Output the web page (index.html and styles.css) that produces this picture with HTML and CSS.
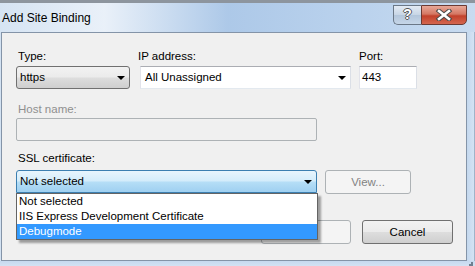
FILE: index.html
```html
<!DOCTYPE html>
<html lang="en">
<head>
    <meta charset="UTF-8">
    <meta name="viewport" content="width=device-width, initial-scale=1.0">
    <title>Add Site Binding</title>
    <link rel="stylesheet" href="styles.css">
</head>
<body>
<div class="window">
    <div class="titlebar">
        <span class="title">Add Site Binding</span>
        <div class="caption_btns">
            <div class="cap_help">?</div>
            <div class="cap_close">
                <svg width="18" height="12" viewBox="0 0 18 12">
                    <path d="M4 2 L14 10 M14 2 L4 10" stroke="#4a4a4a" stroke-width="4.6" stroke-linecap="square"/>
                    <path d="M4 2 L14 10 M14 2 L4 10" stroke="#ffffff" stroke-width="2.6" stroke-linecap="square"/>
                </svg>
            </div>
        </div>
    </div>
    <div class="frame_row">
        <div class="client">
            <div class="row_1">
                <div class="field f_type">
                    <label class="lbl">Type:</label>
                    <div class="combo combo_btn">https<span class="arrow"></span></div>
                </div>
                <div class="field f_ip">
                    <label class="lbl">IP address:</label>
                    <div class="combo combo_edit">All Unassigned<span class="arrow"></span></div>
                </div>
                <div class="field f_port">
                    <label class="lbl">Port:</label>
                    <div class="textbox">443</div>
                </div>
            </div>
            <div class="row_2">
                <label class="lbl lbl_dis">Host name:</label>
                <div class="textbox textbox_dis"></div>
            </div>
            <div class="row_3">
                <label class="lbl">SSL certificate:</label>
                <div class="ssl_line">
                    <div class="ssl_wrap">
                        <div class="combo combo_open">Not selected<span class="arrow"></span></div>
                        <ul class="droplist">
                            <li>Not selected</li>
                            <li>IIS Express Development Certificate</li>
                            <li class="sel">Debugmode</li>
                        </ul>
                    </div>
                    <button class="btn btn_dis" type="button">View...</button>
                </div>
            </div>
            <div class="row_btns">
                <button class="btn btn_ok" type="button">OK</button>
                <button class="btn" type="button">Cancel</button>
            </div>
        </div>
        <div class="right_edge"></div>
    </div>
    <div class="bottom_edge"><span class="grip"></span></div>
</div>
</body>
</html>
```

FILE: styles.css
```css
*{
    box-sizing: border-box;
    font-family: "Liberation Sans", Arial, sans-serif;
}
body{
    margin: 0;
    background: #3a4a5c;
}
.window{
    width: 475px;
    height: 266px;
    display: flex;
    flex-direction: column;
    background: linear-gradient(to right, #d3e2f2, #e2ecf7 22%, #b6cfea 48%, #bcd3ed 75%, #c8dbf0);
}
.titlebar{
    height: 32px;
    display: flex;
    justify-content: space-between;
    border-top: 3px solid #8d959e;
    background: linear-gradient(to right, rgba(214,228,243,.9), rgba(234,241,249,.9) 22%, rgba(172,200,232,.9) 48%, rgba(186,210,237,.9) 75%, rgba(200,219,240,.9));
}
.title{
    font-size: 12px;
    color: #000;
    padding: 8px 0 0 2px;
}
.caption_btns{
    display: flex;
    margin-right: 8px;
    height: 20px;
    margin-top: 2px;
}
.cap_help{
    width: 28px;
    height: 20px;
    border: 1px solid #6b7887;
    border-right: none;
    border-bottom-left-radius: 5px;
    background: linear-gradient(#e3ebf4, #c7d5e5 50%, #b3c6db 51%, #c6d6e8);
    color: #fff;
    font-weight: bold;
    font-size: 14px;
    text-align: center;
    line-height: 17px;
    text-shadow: 1px 0 0 #555, -1px 0 0 #555, 0 1px 0 #555, 0 -1px 0 #555;
}
.cap_close{
    width: 46px;
    height: 20px;
    border: 1px solid #6b3a33;
    border-bottom-right-radius: 5px;
    background: linear-gradient(#e8a898, #d47763 45%, #c2412b 55%, #d4664f);
    display: flex;
    justify-content: center;
    align-items: center;
}
.frame_row{
    display: flex;
    height: 229px;
}
.client{
    width: 466px;
    margin-left: 1px;
    height: 229px;
    border: 1px solid #8494a8;
    background: #f0f0f0;
    padding: 16px 13px 0 14px;
    display: flex;
    flex-direction: column;
    font-size: 11.5px;
}
.right_edge{
    width: 8px;
    background: linear-gradient(to right, #c4d8ee, #d4e3f4);
    border-right: 1px solid #9fb3c9;
}
.bottom_edge{
    height: 5px;
    position: relative;
    background: linear-gradient(#c6d9ef, #d3e2f3);
}
.grip{
    position: absolute;
    right: 2px;
    bottom: 0;
    width: 4px;
    height: 4px;
    border-right: 2px solid #6f7f90;
    border-bottom: 2px solid #6f7f90;
}
.lbl{
    display: block;
    height: 15px;
    line-height: 15px;
    color: #000;
    padding-left: 2px;
}
.lbl_dis{
    color: #8f8f8f;
}
.row_1{
    display: flex;
    gap: 10px;
}
.f_type{
    width: 114px;
}
.f_ip{
    width: 211px;
}
.f_ip .lbl{
    padding-left: 0;
    margin-left: -2px;
}
.f_port{
    width: 58px;
    margin-left: -2px;
}
.f_port .lbl{
    padding-left: 0;
}
.combo{
    position: relative;
    height: 23px;
    line-height: 21px;
    margin-top: 2px;
    padding-left: 3px;
    color: #000;
}
.arrow{
    position: absolute;
    right: 4px;
    top: 9px;
    width: 0;
    height: 0;
    border-left: 4px solid transparent;
    border-right: 4px solid transparent;
    border-top: 4px solid #000;
}
.combo_btn{
    border: 1px solid #707070;
    border-radius: 3px;
    background: linear-gradient(#f2f2f2, #ebebeb 48%, #dddddd 52%, #cfcfcf);
}
.combo_edit{
    border: 1px solid;
    border-color: #abadb3 #dbdfe6 #e3e9ef #e2e3ea;
    background: #fff;
    padding-left: 4px;
}
.textbox{
    height: 23px;
    line-height: 21px;
    margin-top: 2px;
    padding-left: 2px;
    border: 1px solid;
    border-color: #abadb3 #dbdfe6 #e3e9ef #e2e3ea;
    background: #fff;
}
.row_2{
    margin-top: 13px;
}
.textbox_dis{
    width: 301px;
    margin-top: 1px;
    border: 1px solid #adb2b5;
    border-radius: 2px;
    background: #f0f0f0;
}
.row_3{
    margin-top: 10px;
}
.ssl_line{
    display: flex;
    gap: 8px;
    margin-top: 4px;
}
.ssl_wrap{
    position: relative;
    width: 301px;
}
.combo_open{
    margin-top: 0;
    border: 1px solid #3c7fb1;
    border-radius: 3px 3px 0 0;
    background: linear-gradient(#e8f5fd, #d5edfb 45%, #b4ddf6 55%, #9fd0f1);
}
.droplist{
    position: absolute;
    left: 0;
    top: 23px;
    width: 302px;
    margin: 0;
    padding: 0;
    list-style: none;
    background: #fff;
    border: 1px solid #646464;
    box-shadow: 3px 3px 2px rgba(0,0,0,.35);
    z-index: 2;
}
.droplist li{
    height: 15px;
    line-height: 15px;
    padding-left: 2px;
    color: #000;
}
.droplist .sel{
    background: #3399ff;
    color: #fff;
}
.btn{
    width: 91px;
    height: 24px;
    font-size: 11.5px;
    color: #000;
    border: 1px solid #707070;
    border-radius: 3px;
    background: linear-gradient(#f2f2f2, #ebebeb 48%, #dddddd 52%, #cfcfcf);
    padding: 0;
}
.btn_dis{
    width: 86px;
    height: 24px;
    border-color: #adb2b5;
    background: #f4f4f4;
    color: #838383;
}
.btn_ok{
    width: 90px;
    border-color: #adb2b5;
    background: #f4f4f4;
}
.row_btns{
    display: flex;
    justify-content: flex-end;
    gap: 11px;
    margin-top: 26px;
}
```
